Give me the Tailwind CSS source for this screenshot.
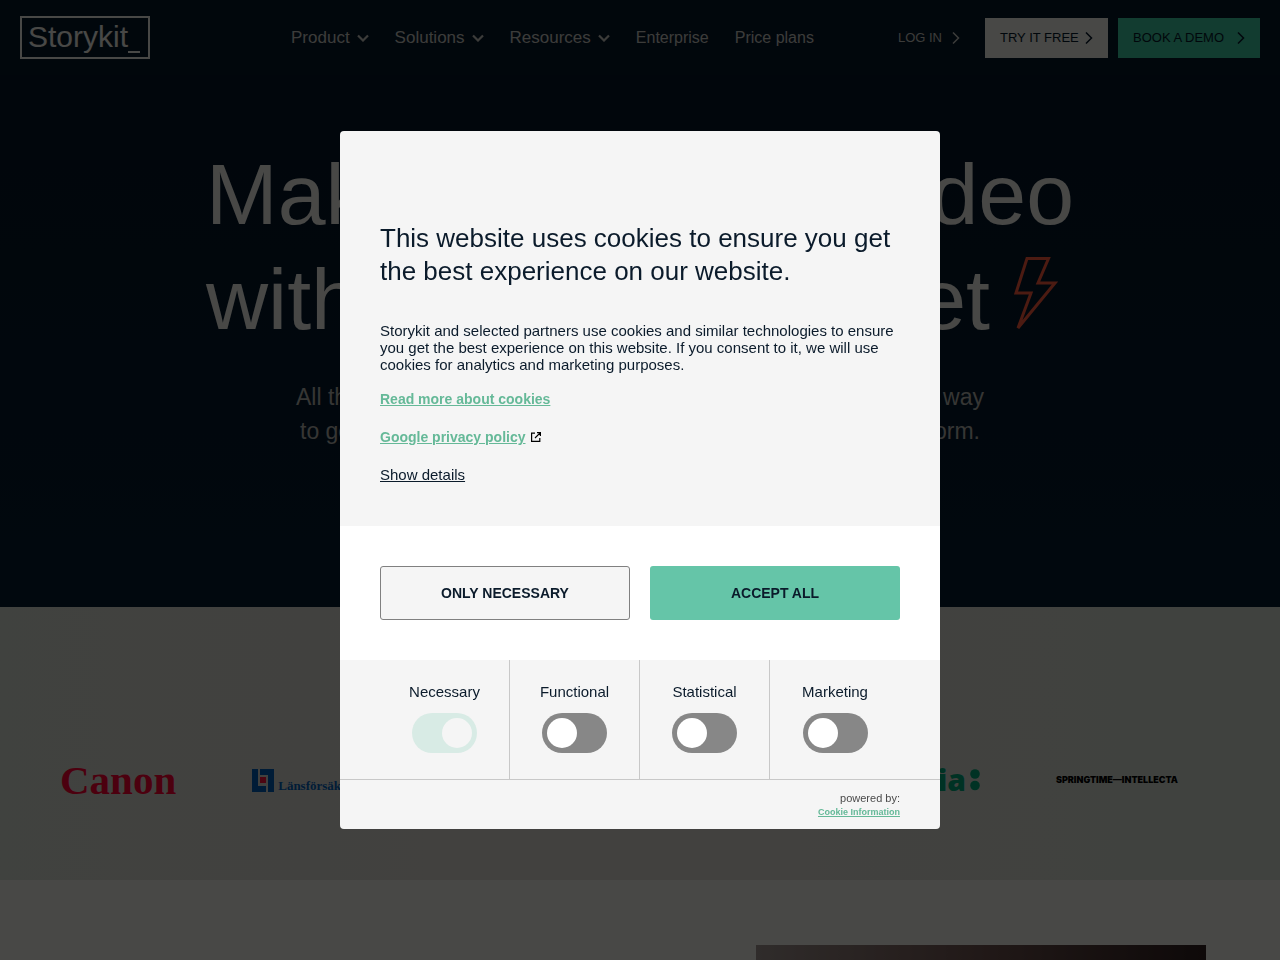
<!DOCTYPE html>
<html lang="en">
<head>
  <meta charset="UTF-8" />
  <meta name="viewport" content="width=device-width, initial-scale=1.0" />
  <title>Storykit</title>
  <script src="https://cdn.jsdelivr.net/npm/@tailwindcss/browser@4"></script>
</head>
<body class="h-screen overflow-hidden bg-[#f0f0ea] font-['Liberation_Sans',Arial,sans-serif] text-[#0b1b2b]">

  <!-- Header -->
  <header class="flex h-[75px] items-center justify-between bg-[#06182a] px-5 text-[#f0f0ea]">
    <a href="#" aria-label="Storykit">
      <svg class="block h-[43px] w-[130px]" viewBox="0 0 130 43" fill="none">
        <rect x="1" y="1" width="128" height="41" stroke="#f0f0ea" stroke-width="2" />
        <text x="8" y="31" font-size="30" fill="#f0f0ea" font-family="Liberation Sans">Storykit</text>
        <path d="M108 36h12" stroke="#f0f0ea" stroke-width="2" />
      </svg>
    </a>

    <nav class="flex items-center gap-[26px] pl-[72px] text-[#c8c8c4]">
      <button class="flex items-center gap-[7px] text-[17px]">Product
        <svg class="h-2 w-3" viewBox="0 0 12 8" fill="none" stroke="currentColor" stroke-width="2.200"><path d="M1 1.500L6 6.500l5-5" /></svg>
      </button>
      <button class="flex items-center gap-[7px] text-[17px]">Solutions
        <svg class="h-2 w-3" viewBox="0 0 12 8" fill="none" stroke="currentColor" stroke-width="2.200"><path d="M1 1.500L6 6.500l5-5" /></svg>
      </button>
      <button class="flex items-center gap-[7px] text-[17px]">Resources
        <svg class="h-2 w-3" viewBox="0 0 12 8" fill="none" stroke="currentColor" stroke-width="2.200"><path d="M1 1.500L6 6.500l5-5" /></svg>
      </button>
      <a href="#" class="text-base">Enterprise</a>
      <a href="#" class="text-base">Price plans</a>
    </nav>

    <div class="flex items-center gap-[10px] text-[13px]">
      <a href="#" class="flex h-10 items-center gap-[10px] px-[15px] text-[#c8c8c4]">LOG IN
        <svg class="h-3 w-2" viewBox="0 0 8 12" fill="none" stroke="currentColor" stroke-width="1.500"><path d="M1 0.500L6.500 6 1 11.500" /></svg>
      </a>
      <a href="#" class="flex h-10 w-[123px] items-center justify-between bg-[#f0f0ea] px-[15px] text-[#06182a]">TRY IT FREE
        <svg class="h-3 w-2" viewBox="0 0 8 12" fill="none" stroke="currentColor" stroke-width="1.500"><path d="M1 0.500L6.500 6 1 11.500" /></svg>
      </a>
      <a href="#" class="flex h-10 w-[142px] items-center justify-between bg-[#3cc8a0] px-[15px] text-[#06182a]">BOOK A DEMO
        <svg class="h-3 w-2" viewBox="0 0 8 12" fill="none" stroke="currentColor" stroke-width="1.500"><path d="M1 0.500L6.500 6 1 11.500" /></svg>
      </a>
    </div>
  </header>

  <!-- Hero -->
  <section class="h-[532px] bg-linear-to-b from-[#051628] to-[#051c30] pt-[67px]">
    <h1 class="mx-auto max-w-[868px] text-[86px] leading-[105px] text-[#f0f0ea]">
      <span class="flex justify-between"><span>Make any</span><span>video</span></span>
      <span class="flex justify-between">
        <span>with any</span>
        <span class="flex items-start gap-6">budget
          <svg class="mt-[9px] mr-4 h-[76px] w-11" viewBox="0 0 44 76" fill="none" stroke="#ff5a3c" stroke-width="3"><path d="M13 2.500H34.500L24 27H41L4 72 17 37H2Z" /></svg>
        </span>
      </span>
    </h1>
    <p class="mx-auto mt-[28px] max-w-[688px] text-[23px] leading-[34px] text-[#b4b4b0]">
      <span class="flex justify-between"><span>All the tools you need in one place, the</span><span>smart way</span></span>
      <span class="flex justify-between px-1"><span>to get your stories out on</span><span>every platform.</span></span>
    </p>
  </section>

  <!-- Customer logos -->
  <section class="flex h-[273px] items-center bg-linear-to-r from-[#d8dcd4] via-[#dedad4] to-[#d6ddd4] pt-[73px] pr-[102px] pl-[60px]">
    <div class="flex h-[27px] w-full items-center gap-[76px]">
      <span class="font-['Liberation_Serif',serif] text-[41px] leading-none font-bold text-[#ff0033]">Canon</span>
      <span class="flex items-end gap-1 text-[#0060b8]">
        <svg class="h-[23px] w-[22px]" viewBox="0 0 22 23">
          <path fill="#0060b8" d="M0 0H6V17H14V23H0ZM8 0H22V23H16V6H8Z" />
          <path fill="#ff143c" d="M8 8h6v6H8z" />
        </svg>
        <span class="font-['Liberation_Serif',serif] text-[13px] leading-none font-bold">Länsförsäkringar</span>
      </span>
      <span class="ml-auto flex items-center gap-1 text-[#00a878]">
        <span class="font-['Open_Sans',sans-serif] text-[30px] leading-none font-extrabold">AcadeMedia</span>
        <svg class="h-[22px] w-[10px]" viewBox="0 0 10 22" fill="currentColor"><circle cx="5" cy="5" r="4.800" /><circle cx="5" cy="16.500" r="4.800" /></svg>
      </span>
      <span class="font-[Inter,sans-serif] text-[9px] font-black whitespace-nowrap text-black">SPRINGTIME—INTELLECTA</span>
    </div>
  </section>

  <!-- Next section -->
  <section class="flex justify-end bg-[#f0f0ea] pt-[65px] pr-[74px]">
    <div class="h-64 w-[450px] bg-linear-to-r from-[#a09490] via-[#705450] to-[#302020]"></div>
  </section>

  <!-- Cookie dialog -->
  <div class="fixed inset-0 flex items-center justify-center bg-black/70">
    <div role="dialog" aria-modal="true" aria-labelledby="cookie-title" class="w-full max-w-[600px] overflow-hidden rounded bg-[#f5f5f5]">
      <div class="px-10 pt-[91px] pb-[41px]">
        <h2 id="cookie-title" class="text-[26px] leading-[33px]">This website uses cookies to ensure you get the best experience on our website.</h2>
        <p class="mt-[34px] text-[15px] leading-[17px]">Storykit and selected partners use cookies and similar technologies to ensure you get the best experience on this website. If you consent to it, we will use cookies for analytics and marketing purposes.</p>
        <div class="mt-4 flex flex-col items-start gap-[18px] text-sm">
          <a href="#" class="font-bold text-[#65b998] underline">Read more about cookies</a>
          <a href="#" class="flex items-center gap-[5px] font-bold text-[#65b998] underline">Google privacy policy
            <svg class="h-[10px] w-[10px]" viewBox="0 0 10 10" fill="none" stroke="#000" stroke-width="1.200"><path d="M4 1.200H0.600V9.400H8.800V6M6 0.600H9.400V4M9.400 0.600L4 6" /></svg>
          </a>
          <button class="text-[15px] leading-5 underline">Show details</button>
        </div>
      </div>

      <div class="grid grid-cols-2 gap-5 bg-white p-10 text-sm font-bold">
        <button class="h-[54px] rounded-[3px] border border-[#808080] bg-[#f5f5f5]">ONLY NECESSARY</button>
        <button class="h-[54px] rounded-[3px] bg-[#65c5a8]">ACCEPT ALL</button>
      </div>

      <div class="grid grid-cols-4 divide-x divide-[#c8c8c8] border-b border-[#c8c8c8] px-10 text-[15px] leading-5">
        <label class="flex h-[119px] flex-col items-center gap-[11px] pt-[22px]">Necessary
          <input type="checkbox" checked disabled class="h-10 w-[65px] appearance-none rounded-full bg-[#d8ebe5] p-[5px] before:ml-[25px] before:block before:size-[30px] before:rounded-full before:bg-[#f5f5f5]" />
        </label>
        <label class="flex h-[119px] flex-col items-center gap-[11px] pt-[22px]">Functional
          <input type="checkbox" class="h-10 w-[65px] appearance-none rounded-full bg-[#878787] p-[5px] before:block before:size-[30px] before:rounded-full before:bg-white checked:bg-[#65c5a8] checked:before:ml-[25px]" />
        </label>
        <label class="flex h-[119px] flex-col items-center gap-[11px] pt-[22px]">Statistical
          <input type="checkbox" class="h-10 w-[65px] appearance-none rounded-full bg-[#878787] p-[5px] before:block before:size-[30px] before:rounded-full before:bg-white checked:bg-[#65c5a8] checked:before:ml-[25px]" />
        </label>
        <label class="flex h-[119px] flex-col items-center gap-[11px] pt-[22px]">Marketing
          <input type="checkbox" class="h-10 w-[65px] appearance-none rounded-full bg-[#878787] p-[5px] before:block before:size-[30px] before:rounded-full before:bg-white checked:bg-[#65c5a8] checked:before:ml-[25px]" />
        </label>
      </div>

      <div class="flex flex-col items-end px-10 pt-[11px] pb-[10px]">
        <span class="text-[11px] leading-[14px] text-[#4a4a4a]">powered by:</span>
        <a href="#" class="text-[9px] leading-[14px] font-bold text-[#65b998] underline">Cookie Information</a>
      </div>
    </div>
  </div>

</body>
</html>
